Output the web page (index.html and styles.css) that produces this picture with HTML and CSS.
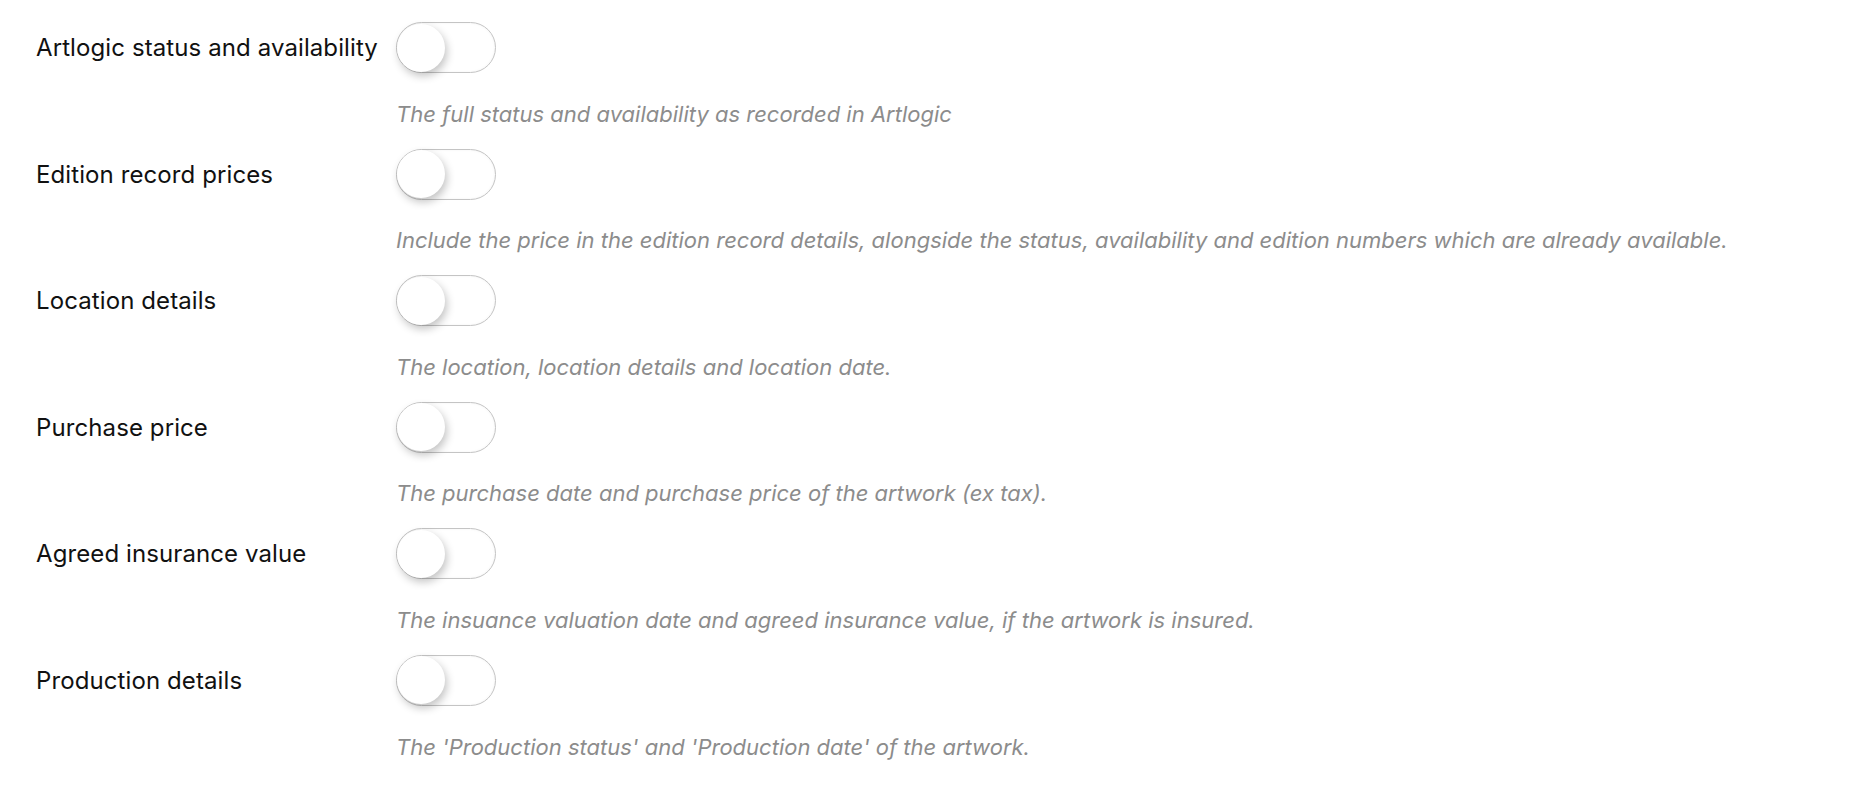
FILE: index.html
```html
<!DOCTYPE html>
<html>
<head>
<meta charset="utf-8">
<link rel="stylesheet" href="styles.css">
</head>
<body>
<div class="settings">
  <div class="item">
    <div class="row"><span class="label">Artlogic status and availability</span><span class="toggle"><span class="knob"></span></span></div>
    <p class="desc">The full status and availability as recorded in Artlogic</p>
  </div>
  <div class="item">
    <div class="row"><span class="label">Edition record prices</span><span class="toggle"><span class="knob"></span></span></div>
    <p class="desc">Include the price in the edition record details, alongside the status, availability and edition numbers which are already available.</p>
  </div>
  <div class="item">
    <div class="row"><span class="label">Location details</span><span class="toggle"><span class="knob"></span></span></div>
    <p class="desc">The location, location details and location date.</p>
  </div>
  <div class="item">
    <div class="row"><span class="label">Purchase price</span><span class="toggle"><span class="knob"></span></span></div>
    <p class="desc">The purchase date and purchase price of the artwork (ex tax).</p>
  </div>
  <div class="item">
    <div class="row"><span class="label">Agreed insurance value</span><span class="toggle"><span class="knob"></span></span></div>
    <p class="desc">The insuance valuation date and agreed insurance value, if the artwork is insured.</p>
  </div>
  <div class="item">
    <div class="row"><span class="label">Production details</span><span class="toggle"><span class="knob"></span></span></div>
    <p class="desc">The 'Production status' and 'Production date' of the artwork.</p>
  </div>
</div>
</body>
</html>
```

FILE: styles.css
```css
html, body {
  margin: 0;
  padding: 0;
  background: #ffffff;
}
body {
  font-family: "Inter", "Liberation Sans", sans-serif;
  color: #111111;
}
.settings {
  padding: 0 0 0 36px;
}
.item {
  padding-top: 22px;
  height: 104.6px;
}
.row {
  display: flex;
  align-items: center;
  height: 51px;
}
.label {
  width: 360px;
  flex: none;
  font-size: 24px;
  font-weight: 400;
  letter-spacing: 0.1px;
  white-space: nowrap;
}
.toggle {
  flex: none;
  box-sizing: border-box;
  width: 100px;
  height: 51px;
  border-radius: 26px;
  border: 1.5px solid #c4c4c4;
  background: #ffffff;
  box-shadow: inset 0 0 3px rgba(0,0,0,0.05);
  display: flex;
  align-items: center;
}
.knob {
  display: block;
  width: 48px;
  height: 48px;
  border-radius: 50%;
  background: #ffffff;
  box-shadow: 2px 4px 8px rgba(0,0,0,0.24);
}
.desc {
  margin: 28.6px 0 0 360px;
  font-size: 22px;
  line-height: 24px;
  font-style: italic;
  color: #8c8c8c;
  white-space: nowrap;
}
```
